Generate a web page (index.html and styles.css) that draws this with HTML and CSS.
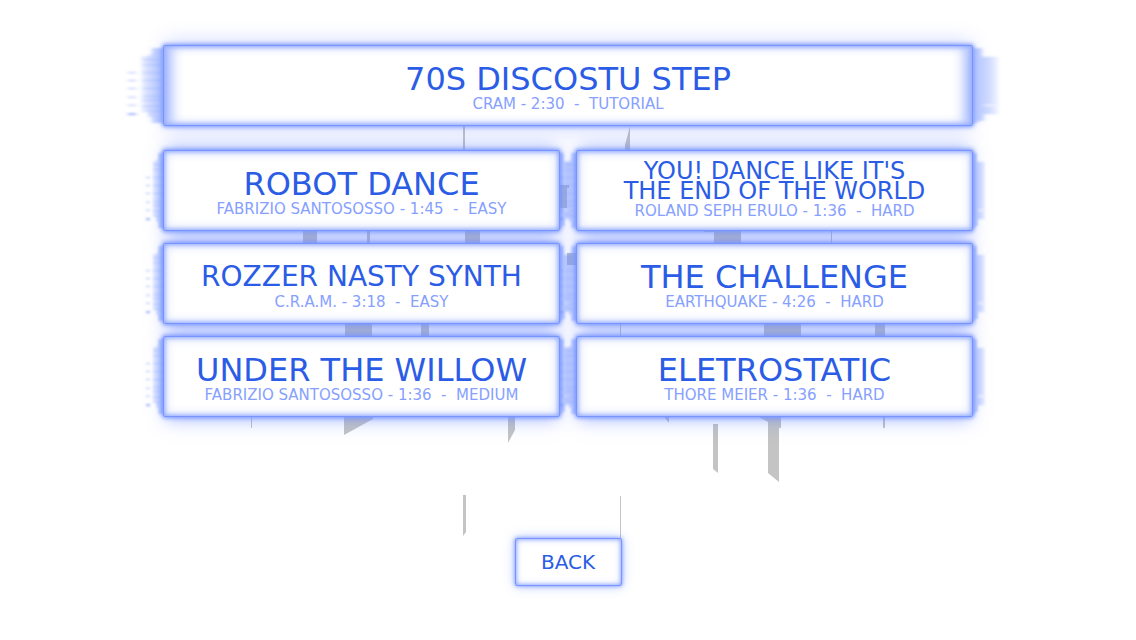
FILE: index.html
```html
<!DOCTYPE html>
<html lang="en">
<head>
<meta charset="utf-8">
<meta name="viewport" content="width=device-width, initial-scale=1">
<title>Song select</title>
<link rel="stylesheet" href="styles.css">
</head>
<body>
<svg class="defs" aria-hidden="true">
  <defs>
    <linearGradient id="fadeLeft" x1="0" x2="1">
      <stop offset="0" stop-color="#6f90ff" stop-opacity=".16"/>
      <stop offset="1" stop-color="#6f90ff" stop-opacity=".6"/>
    </linearGradient>
    <linearGradient id="fadeRight" x1="0" x2="1">
      <stop offset="0" stop-color="#6f90ff" stop-opacity=".5"/>
      <stop offset=".6" stop-color="#6f90ff" stop-opacity=".35"/>
      <stop offset="1" stop-color="#6f90ff" stop-opacity=".12"/>
    </linearGradient>
    <filter id="soft" x="-20%" y="-20%" width="140%" height="140%"><feGaussianBlur stdDeviation="1"/></filter>
    <symbol id="glitchLeft" viewBox="0 0 20 80" preserveAspectRatio="none">
      <g filter="url(#soft)">
        <path fill="url(#fadeLeft)" d="M14 2H20V78H14V72H12V66H9V10H13V8H14Z"/>
        <path stroke="#7896ff" stroke-opacity=".35" d="M9 14H20M9 19H20M9 27H20M9 35H20M9 43H20M9 51H20M9 55H20M9 61H20M9 66H20"/>
        <path stroke="#7896ff" stroke-opacity=".6" d="M2 27H6M2 35H6M2 43H6M2 52H6M2 60H6"/>
        <path stroke="#6080ff" stroke-width="2" stroke-opacity=".6" d="M2 69H6"/>
      </g>
    </symbol>
    <symbol id="glitchRight" viewBox="0 0 20 80" preserveAspectRatio="none">
      <g filter="url(#soft)">
        <path fill="url(#fadeRight)" d="M0 2H5V11H13V69H6V76H3V78H0Z"/>
        <path stroke="#fff" stroke-opacity=".8" d="M6 60H11"/>
      </g>
    </symbol>
  </defs>
</svg>
<main class="stage">
  <svg class="scenery" viewBox="163 45 810 541" aria-hidden="true">
    <path d="M463 126h2v26h-2zM630 126v25h-5v-6zM559 185h10v3h-2v20h-8zM567 253h10v12h-10zM303 230h14v14h-14zM367 230h3v14h-3zM465 230h15v14h-15zM704 230h37v14h-27v-12h-10zM831 230h1v14h-1zM345 323h27v14h-27zM421 323h8v14h-8zM620 323h1v14h-1zM764 323h37v14h-37zM875 323h10v14h-10zM251 416h1v12h-1zM344 416h29v3l-29 16zM508 416h7v14l-7 13zM665 416h4v7l-4-5zM713 424h5v49l-5-4zM757 416h24v12h-2v54l-11-9v-51zM883 416h2v12h-2zM463 495h3v37l-3 4zM620 496h1v43h-1z"/>
  </svg>
  <div class="songs">
    <button class="card card-wide" type="button">
      <svg class="glitch glitch-left" aria-hidden="true"><use href="#glitchLeft"/></svg>
      <svg class="glitch glitch-right" aria-hidden="true"><use href="#glitchRight"/></svg>
      <span class="title">70S DISCOSTU STEP</span>
      <span class="meta">CRAM - 2:30 &nbsp;- &nbsp;TUTORIAL</span>
    </button>
    <button class="card" type="button">
      <svg class="glitch glitch-left" aria-hidden="true"><use href="#glitchLeft"/></svg>
      <svg class="glitch glitch-right" aria-hidden="true"><use href="#glitchRight"/></svg>
      <span class="title">ROBOT DANCE</span>
      <span class="meta">FABRIZIO SANTOSOSSO - 1:45 &nbsp;- &nbsp;EASY</span>
    </button>
    <button class="card card-double" type="button">
      <svg class="glitch glitch-left" aria-hidden="true"><use href="#glitchLeft"/></svg>
      <svg class="glitch glitch-right" aria-hidden="true"><use href="#glitchRight"/></svg>
      <span class="title title-double">YOU! DANCE LIKE IT'S<br>THE END OF THE WORLD</span>
      <span class="meta">ROLAND SEPH ERULO - 1:36 &nbsp;- &nbsp;HARD</span>
    </button>
    <button class="card" type="button">
      <svg class="glitch glitch-left" aria-hidden="true"><use href="#glitchLeft"/></svg>
      <svg class="glitch glitch-right" aria-hidden="true"><use href="#glitchRight"/></svg>
      <span class="title title-small">ROZZER NASTY SYNTH</span>
      <span class="meta">C.R.A.M. - 3:18 &nbsp;- &nbsp;EASY</span>
    </button>
    <button class="card" type="button">
      <svg class="glitch glitch-left" aria-hidden="true"><use href="#glitchLeft"/></svg>
      <svg class="glitch glitch-right" aria-hidden="true"><use href="#glitchRight"/></svg>
      <span class="title">THE CHALLENGE</span>
      <span class="meta">EARTHQUAKE - 4:26 &nbsp;- &nbsp;HARD</span>
    </button>
    <button class="card" type="button">
      <svg class="glitch glitch-left" aria-hidden="true"><use href="#glitchLeft"/></svg>
      <svg class="glitch glitch-right" aria-hidden="true"><use href="#glitchRight"/></svg>
      <span class="title">UNDER THE WILLOW</span>
      <span class="meta">FABRIZIO SANTOSOSSO - 1:36 &nbsp;- &nbsp;MEDIUM</span>
    </button>
    <button class="card" type="button">
      <svg class="glitch glitch-left" aria-hidden="true"><use href="#glitchLeft"/></svg>
      <svg class="glitch glitch-right" aria-hidden="true"><use href="#glitchRight"/></svg>
      <span class="title">ELETROSTATIC</span>
      <span class="meta">THORE MEIER - 1:36 &nbsp;- &nbsp;HARD</span>
    </button>
  </div>
  <button class="back" type="button">BACK</button>
</main>
</body>
</html>
```

FILE: styles.css
```css
* { box-sizing: border-box; }

body {
  margin: 0;
  background: #fff;
  font-family: "DejaVu Sans", sans-serif;
  overflow-x: hidden;
}

.defs {
  position: absolute;
  width: 0;
  height: 0;
}

.stage {
  position: relative;
  isolation: isolate;
  display: flex;
  flex-direction: column;
  align-items: center;
  gap: 121px;
  width: calc(100% - 80px);
  max-width: 810px;
  margin: 0 auto;
  padding: 45px 0 40px;
}

.scenery {
  position: absolute;
  z-index: -2;
  top: 45px;
  left: 0;
  width: 100%;
  overflow: visible;
  fill: #c4c4c4;
}

.songs {
  display: grid;
  grid-template-columns: 1fr 1fr;
  gap: 12px 16px;
  width: 100%;
}

.card,
.back {
  position: relative;
  border: 1px solid #7895ff;
  border-radius: 2px;
  background: #fff;
  color: #2b5ce6;
  font-family: inherit;
  cursor: pointer;
}

.card {
  display: flex;
  flex-direction: column;
  align-items: center;
  justify-content: center;
  gap: 1px;
  min-height: 81px;
  padding: 6px 4px 0;
  box-shadow: 0 0 4px 1px #7895ff, inset 0 0 4px 1px #8fa8ff, inset 0 0 12px #c3d0ff;
}

.card-double {
  padding-top: 0;
}

.card-wide {
  grid-column: 1 / -1;
  margin-bottom: 12px;
  box-shadow: 0 0 4px 1px #7895ff, inset 0 0 4px 1px #8fa8ff, inset 0 0 12px #c3d0ff,
    inset 14px 0 14px -8px #8fa8ff, inset -14px 0 14px -8px #8fa8ff;
}

.card::before {
  content: "";
  position: absolute;
  z-index: -1;
  inset: 0 6px;
  box-shadow: 0 0 16px 4px rgba(85, 120, 255, .5);
}

.card-wide::before {
  box-shadow: 0 0 18px 4px rgba(85, 120, 255, .3);
}

.glitch {
  position: absolute;
  z-index: -1;
  top: 0;
  width: 20px;
  height: 100%;
  overflow: visible;
}

.glitch-left { right: 100%; }
.glitch-right { left: 100%; }
.card-wide .glitch { width: 40px; }

.title {
  font-size: 32px;
  line-height: 30px;
  white-space: nowrap;
}

.title-small {
  font-size: 28px;
}

.title-double {
  font-size: 24px;
  line-height: 20px;
}

.meta {
  color: #86a0ff;
  font-size: 15px;
  line-height: 18px;
  white-space: nowrap;
}

.back {
  min-width: 107px;
  padding: 12px 20px;
  font-size: 20px;
  line-height: 22px;
  box-shadow: 0 0 4px #7895ff, 0 0 12px rgba(85, 120, 255, .4), inset 0 0 4px #7895ff, inset 0 0 8px #d4ddff;
}

@media (max-width: 860px) {
  .songs { grid-template-columns: 1fr; }
  .title { white-space: normal; }
  .meta { white-space: normal; }
}
```
